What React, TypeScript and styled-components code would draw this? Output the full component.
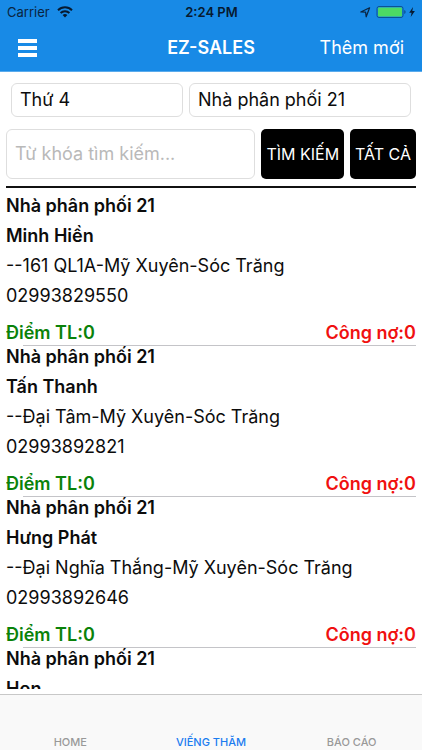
import React from "react";
import styled, { createGlobalStyle } from "styled-components";

const GlobalStyle = createGlobalStyle`
  * { box-sizing: border-box; }
  body {
    margin: 0;
    background: #fff;
    color: #0c0c0c;
    font-family: Inter, "Noto Sans", sans-serif;
  }
  button, input, select { font-family: inherit; }
`;

const Screen = styled.div`
  display: flex;
  flex-direction: column;
  height: 100vh;
`;

const Header = styled.header`
  background: #188ae6;
  border-bottom: 1px solid #5aabec;
`;

const HeaderGrid = styled.div`
  display: grid;
  grid-template-columns: 1fr auto 1fr;
  align-items: center;
`;

const StatusBar = styled(HeaderGrid)`
  height: 24px;
  padding: 0 6px 0 7px;
  color: #0a2440;
  font-size: 13px;
`;

const StatusGroup = styled.div<{ $end?: boolean }>`
  display: flex;
  align-items: center;
  justify-content: ${(p) => (p.$end ? "flex-end" : "flex-start")};
  gap: 7px;
`;

const Clock = styled.span`
  color: #071a30;
  font-weight: 600;
`;

const NavBar = styled(HeaderGrid)`
  height: 47px;
  padding: 0 18px;
  color: #fff;
`;

const Title = styled.h1`
  margin: 0;
  font-size: 18px;
  font-weight: 600;
`;

const MenuButton = styled.button`
  display: flex;
  justify-self: start;
  padding: 0;
  border: 0;
  background: none;
`;

const AddButton = styled.button`
  justify-self: end;
  padding: 0;
  border: 0;
  background: none;
  color: #fff;
  font-size: 18px;
`;

const Filters = styled.div`
  display: grid;
  grid-template-columns: 172fr 222fr;
  gap: 6px;
  padding: 11px 11px 12px;
`;

const Picker = styled.select`
  appearance: none;
  width: 100%;
  height: 34px;
  padding: 0 8px 2px;
  border: 1px solid #dedede;
  border-radius: 6px;
  background: #fff;
  color: #0c0c0c;
  font-size: 18px;
`;

const SearchForm = styled.form`
  display: flex;
  gap: 6px;
  margin: 0 6px;
  padding-bottom: 7px;
  border-bottom: 2px solid #111;
`;

const SearchInput = styled.input`
  flex: 1;
  min-width: 0;
  height: 50px;
  padding: 0 8px 2px;
  border: 1px solid #dedede;
  border-radius: 6px;
  background: #fff;
  color: #0c0c0c;
  font-size: 18px;
  &::placeholder { color: #b9b9b9; opacity: 1; }
`;

const SearchButton = styled.button`
  height: 50px;
  padding: 0 5px;
  border: 0;
  border-radius: 5px;
  background: #000;
  color: #fff;
  font-size: 16px;
  white-space: nowrap;
`;

const CustomerList = styled.ul`
  flex: 1;
  min-height: 0;
  margin: 3px 6px 5px;
  padding: 0;
  overflow-y: auto;
  scrollbar-width: none;
  list-style: none;
`;

const Customer = styled.li`
  font-size: 18px;
  line-height: 30px;
`;

const Line = styled.div<{ $strong?: boolean }>`
  font-weight: ${(p) => (p.$strong ? 600 : 400)};
`;

const Totals = styled.div`
  display: flex;
  justify-content: space-between;
  padding-top: 10px;
  line-height: 24px;
  font-weight: 600;
`;

const Total = styled.span<{ $color: string }>`
  color: ${(p) => p.$color};
`;

const Divider = styled.hr`
  height: 1px;
  margin: 0 0 -4px 17px;
  border: 0;
  background: #c4c4c8;
`;

const TabBar = styled.nav`
  display: grid;
  grid-template-columns: repeat(3, 1fr);
  height: 56px;
  border-top: 1px solid #c8c8c8;
  background: #f9f9f9;
`;

const Tab = styled.a<{ $active?: boolean }>`
  display: flex;
  align-items: flex-end;
  justify-content: center;
  padding-bottom: 1px;
  color: ${(p) => (p.$active ? "#1b7cf0" : "#999")};
  font-size: 11px;
  font-weight: 500;
  line-height: 14px;
  text-decoration: none;
`;

const WifiIcon = () => (
  <svg width="16" height="12" viewBox="0 0 16 12" fill="none" stroke="#071a30" strokeWidth="2" aria-hidden="true">
    <path d="M1 4.2a10 10 0 0 1 14 0" />
    <path d="M3.6 7a6.2 6.2 0 0 1 8.8 0" />
    <path d="M8 11.6 5.6 9.1a3.4 3.4 0 0 1 4.8 0z" fill="#071a30" stroke="none" />
  </svg>
);

const PowerIcons = () => (
  <svg width="56" height="14" viewBox="0 0 56 14" aria-hidden="true">
    <path d="M.8 7 9.6 2.8 6.2 11.8 5.6 7.2z" fill="none" stroke="#0a2440" strokeWidth="1.2" strokeLinejoin="round" />
    <rect x="17" y="1.5" width="26" height="11" rx="2" fill="none" stroke="#0c5193" />
    <rect x="18" y="2.5" width="24" height="9" rx="1" fill="#4cd964" />
    <path d="M44.2 5v4q1.5-.6 1.5-2t-1.5-2z" fill="#0c5193" />
    <path d="M53 2 49.2 7.8h2.4l-.9 4.2 4.2-6h-2.6z" fill="#071a30" />
  </svg>
);

const MenuIcon = () => (
  <svg width="19" height="18" viewBox="0 0 19 18" fill="#fff" aria-hidden="true">
    <rect width="19" height="4" />
    <rect y="7" width="19" height="4" />
    <rect y="14" width="19" height="4" />
  </svg>
);

const distributor = "Nhà phân phối 21";

type CustomerData = { name: string; address?: string; phone?: string };

const customers: CustomerData[] = [
  { name: "Minh Hiền", address: "--161 QL1A-Mỹ Xuyên-Sóc Trăng", phone: "02993829550" },
  { name: "Tấn Thanh", address: "--Đại Tâm-Mỹ Xuyên-Sóc Trăng", phone: "02993892821" },
  { name: "Hưng Phát", address: "--Đại Nghĩa Thắng-Mỹ Xuyên-Sóc Trăng", phone: "02993892646" },
  { name: "Hon" },
];

export default function App() {
  return (
    <Screen>
      <GlobalStyle />
      <Header>
        <StatusBar>
          <StatusGroup>
            Carrier
            <WifiIcon />
          </StatusGroup>
          <Clock>2:24 PM</Clock>
          <StatusGroup $end>
            <PowerIcons />
          </StatusGroup>
        </StatusBar>
        <NavBar>
          <MenuButton type="button" aria-label="Menu">
            <MenuIcon />
          </MenuButton>
          <Title>EZ-SALES</Title>
          <AddButton type="button">Thêm mới</AddButton>
        </NavBar>
      </Header>
      <Filters>
        <Picker aria-label="Ngày">
          <option>Thứ 4</option>
        </Picker>
        <Picker aria-label="Nhà phân phối">
          <option>{distributor}</option>
        </Picker>
      </Filters>
      <SearchForm onSubmit={(e) => e.preventDefault()}>
        <SearchInput aria-label="Từ khóa tìm kiếm" placeholder="Từ khóa tìm kiếm..." />
        <SearchButton type="submit">TÌM KIẾM</SearchButton>
        <SearchButton type="button">TẤT CẢ</SearchButton>
      </SearchForm>
      <CustomerList>
        {customers.map((c) => (
          <Customer key={c.name}>
            <Line $strong>{distributor}</Line>
            <Line $strong>{c.name}</Line>
            {c.address && (
              <>
                <Line>{c.address}</Line>
                <Line>{c.phone}</Line>
                <Totals>
                  <Total $color="#0a820a">Điểm TL:0</Total>
                  <Total $color="#f01010">Công nợ:0</Total>
                </Totals>
                <Divider />
              </>
            )}
          </Customer>
        ))}
      </CustomerList>
      <TabBar>
        <Tab href="#home">HOME</Tab>
        <Tab href="#visit" $active>VIẾNG THĂM</Tab>
        <Tab href="#report">BÁO CÁO</Tab>
      </TabBar>
    </Screen>
  );
}
